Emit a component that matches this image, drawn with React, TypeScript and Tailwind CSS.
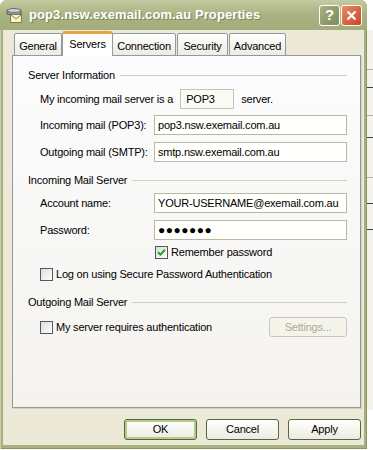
import type { ReactNode } from "react";

function GroupLabel({ children }: { children: ReactNode }) {
  return (
    <div className="flex items-center h-[14px] pl-[15px]">
      <span className="whitespace-nowrap">{children}</span>
      <div className="flex-1 h-px bg-[#d0d0bf] ml-[5px]" />
    </div>
  );
}

function Field({ label, value, className }: { label: string; value: ReactNode; className?: string }) {
  return (
    <div className={"flex items-center h-[20px] pl-[27px] " + (className ?? "")}>
      <span className="w-[114px] whitespace-nowrap">{label}</span>
      <div className="flex-1 h-full flex items-center border border-[#b7b9a4] bg-[#fffffb] px-[3px] whitespace-nowrap">
        {value}
      </div>
    </div>
  );
}

function Checkbox({ checked }: { checked?: boolean }) {
  return (
    <div className="w-[13px] h-[13px] border border-[#4b5a6b] bg-gradient-to-br from-[#dcdcd5] to-white flex items-center justify-center shrink-0">
      {checked && (
        <svg width="9" height="9" viewBox="0 0 9 9">
          <path d="M1 4.2 L3.4 6.6 L8 1.8" stroke="#21a121" strokeWidth="2" fill="none" />
        </svg>
      )}
    </div>
  );
}

function Button({ children, isDefault, disabled }: { children: ReactNode; isDefault?: boolean; disabled?: boolean }) {
  return (
    <div
      className={
        "w-[73px] h-[21px] rounded-[3px] border flex items-center justify-center bg-gradient-to-b from-white to-[#ecebe0] " +
        (disabled ? "border-[#c9c7ba] text-[#aca899]" : "border-[#55683a]") +
        (isDefault ? " shadow-[inset_0_0_0_2px_#b6ca8c]" : "")
      }
    >
      {children}
    </div>
  );
}

const tabs = [
  { name: "General", w: "w-[48px]" },
  { name: "Servers", w: "w-[51px]", active: true },
  { name: "Connection", w: "w-[64px]" },
  { name: "Security", w: "w-[51px]" },
  { name: "Advanced", w: "w-[57px]" },
];

export default function App() {
  return (
    <div className="relative w-[373px] h-[450px] bg-white overflow-hidden font-['Liberation_Sans',Arial,sans-serif] text-[11px] tracking-[-0.2px] text-black">
      {/* window behind, right edge */}
      <div className="absolute left-[366px] top-[30px] w-[7px] h-[380px] bg-[#f4f3ee] border-l border-[#8c8c80]">
        <div className="h-[40px] border-b border-[#b0b0a8]" />
        <div className="h-[18px] border-b border-[#404040]" />
        <div className="h-[28px] border-b border-[#b0b0a8]" />
        <div className="h-[22px] border-b border-[#404040]" />
        <div className="h-[40px] border-b border-[#b0b0a8]" />
        <div className="h-[26px] border-b border-[#404040]" />
        <div className="h-[26px] border-b border-[#404040]" />
      </div>

      <div className="absolute left-0 top-0 w-[367px] h-[449px] flex flex-col rounded-t-[7px] bg-[#a7b07f] px-[3px] pb-[4px] shadow-[inset_1px_0_0_#c9d0ab,inset_-1px_0_0_#8a9463,inset_0_-1px_0_#8a9463]">
        {/* title bar */}
        <div className="h-[30px] -mx-[3px] px-[5px] flex items-center rounded-t-[7px] bg-gradient-to-b from-[#c4cba0] via-[#a9b281] to-[#a3ac7b]">
          <svg width="18" height="16" viewBox="0 0 18 16" className="shrink-0">
            <path d="M2 3 Q9 0 16 3 L16 7 Q9 10 2 7 Z" fill="#8b939b" stroke="#4d5560" strokeWidth="0.8" />
            <ellipse cx="9" cy="3.5" rx="6.5" ry="2" fill="#c9ced3" stroke="#4d5560" strokeWidth="0.6" />
            <rect x="5.5" y="7.5" width="11" height="8" fill="#fbf3c6" stroke="#6b6a40" strokeWidth="0.8" />
            <path d="M5.5 7.5 L11 12 L16.5 7.5" stroke="#6b6a40" strokeWidth="0.8" fill="none" />
          </svg>
          <span className="ml-[6px] text-white font-bold text-[13px] tracking-[0.1px] [text-shadow:1px_1px_0_#7d875a]">
            pop3.nsw.exemail.com.au Properties
          </span>
          <div className="flex-1" />
          <div className="w-[21px] h-[21px] rounded-[3px] border border-white bg-gradient-to-br from-[#a8b284] to-[#7e8a58] flex items-center justify-center text-white font-bold text-[15px]">
            ?
          </div>
          <div className="ml-[1px] w-[21px] h-[21px] rounded-[3px] border border-white bg-gradient-to-br from-[#e98a6a] to-[#c9421f] flex items-center justify-center">
            <svg width="11" height="11" viewBox="0 0 11 11">
              <path d="M1.5 1.5 L9.5 9.5 M9.5 1.5 L1.5 9.5" stroke="white" strokeWidth="2.2" />
            </svg>
          </div>
        </div>

        {/* dialog body */}
        <div className="flex-1 flex flex-col bg-[#ece9d8] pl-[9px] pr-[3px] pt-[1px]">
          <div className="h-[25px] flex items-end pl-[2px]">
            {tabs.map((t) =>
              t.active ? (
                <div
                  key={t.name}
                  className={t.w + " relative z-10 -mx-[1px] h-[25px] bg-white border border-b-0 border-[#919b9c] border-t-[3px] border-t-[#e8a34a] rounded-t-[3px] flex items-start justify-center pt-[2px]"}
                >
                  {t.name}
                </div>
              ) : (
                <div
                  key={t.name}
                  className={t.w + " h-[23px] bg-gradient-to-b from-white to-[#ecebe4] border border-[#919b9c] rounded-t-[2px] flex items-start justify-center pt-[4px] mr-[1px]"}
                >
                  {t.name}
                </div>
              )
            )}
          </div>

          <div className="h-[353px] -mt-[1px] border border-[#919b9c] bg-gradient-to-b from-[#fcfcfe] to-[#f4f3ee] flex flex-col pr-[13px] shadow-[1px_1px_0_#d0cebf]">
            <div className="mt-[12px]">
              <GroupLabel>Server Information</GroupLabel>
            </div>
            <div className="mt-[7px] h-[20px] flex items-center pl-[27px]">
              <span className="whitespace-nowrap">My incoming mail server is a</span>
              <div className="ml-[7px] w-[54px] h-full border border-[#c3c3b6] bg-[#fbfbf6] flex items-center px-[5px]">POP3</div>
              <span className="ml-[7px]">server.</span>
            </div>
            <Field className="mt-[6px]" label="Incoming mail (POP3):" value="pop3.nsw.exemail.com.au" />
            <Field className="mt-[7px]" label="Outgoing mail (SMTP):" value="smtp.nsw.exemail.com.au" />

            <div className="mt-[11px]">
              <GroupLabel>Incoming Mail Server</GroupLabel>
            </div>
            <Field className="mt-[6px]" label="Account name:" value="YOUR-USERNAME@exemail.com.au" />
            <Field
              className="mt-[7px]"
              label="Password:"
              value={<span className="text-[12px] tracking-[0.5px] leading-none">●●●●●●●</span>}
            />
            <div className="mt-[6px] h-[13px] flex items-center pl-[142px]">
              <Checkbox checked />
              <span className="ml-[3px]">Remember password</span>
            </div>
            <div className="mt-[9px] h-[13px] flex items-center pl-[27px]">
              <Checkbox />
              <span className="ml-[3px]">Log on using Secure Password Authentication</span>
            </div>

            <div className="mt-[14px]">
              <GroupLabel>Outgoing Mail Server</GroupLabel>
            </div>
            <div className="mt-[8px] h-[20px] flex items-center pl-[27px]">
              <Checkbox />
              <span className="ml-[3px]">My server requires authentication</span>
              <div className="flex-1" />
              <div className="w-[78px] h-[20px] rounded-[3px] border border-[#c9c7ba] bg-[#f5f4ea] text-[#aca899] flex items-center justify-center">
                Settings...
              </div>
            </div>
          </div>

          <div className="mt-[11px] flex justify-end gap-[9px]">
            <Button isDefault>OK</Button>
            <Button>Cancel</Button>
            <Button>Apply</Button>
          </div>
        </div>
      </div>
    </div>
  );
}
